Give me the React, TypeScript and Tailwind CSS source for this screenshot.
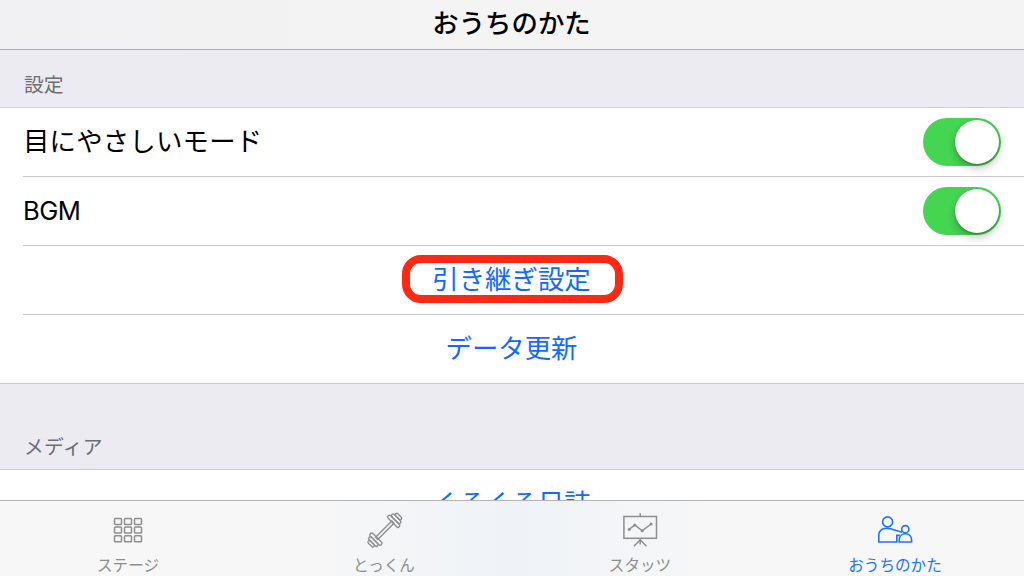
import { useState } from 'react'
import type { ReactNode } from 'react'
import clsx from 'clsx'

const GridIcon = () => (
  <svg width="40" height="40" viewBox="0 0 40 40" fill="none" stroke="currentColor" strokeWidth="1.5">
    {[8.4, 17.1, 25.8].map((y) =>
      [6.5, 16.5, 26.5].map((x) => <rect key={`${x}-${y}`} x={x} y={y} width="7" height="6" rx="0.8" />)
    )}
  </svg>
)

const BarbellIcon = () => (
  <svg width="40" height="40" viewBox="0 0 40 40" fill="none" stroke="currentColor" strokeWidth="1.4">
    <g transform="translate(20.8 20.2) rotate(-45)">
      <rect x="-11.5" y="-1.5" width="23" height="3" />
      <rect x="10.8" y="-7.8" width="3.6" height="15.6" rx="1.8" />
      <rect x="14.4" y="-6" width="3.4" height="12" rx="1.7" />
      <rect x="17.8" y="-3.9" width="3" height="7.8" rx="1.5" />
      <rect x="-14.4" y="-7.8" width="3.6" height="15.6" rx="1.8" />
      <rect x="-17.8" y="-6" width="3.4" height="12" rx="1.7" />
      <rect x="-20.8" y="-3.9" width="3" height="7.8" rx="1.5" />
    </g>
  </svg>
)

const BoardIcon = () => (
  <svg width="40" height="40" viewBox="0 0 40 40" fill="none" stroke="currentColor" strokeWidth="1.5">
    <rect x="3.9" y="6.5" width="32.6" height="21.8" />
    <path d="M20.2 3.2v3.3M20.2 28.2v6.3M20.2 29.7l-6.3 6.6M20.2 29.7l6.3 6.6" />
    <path d="M9.2 19.4l5.6-4.4 7.4 5.8 8.9-6.8" />
    <g fill="currentColor" stroke="none">
      <circle cx="9.2" cy="19.4" r="1.5" />
      <circle cx="14.8" cy="15" r="1.5" />
      <circle cx="22.2" cy="20.8" r="1.5" />
      <circle cx="31.1" cy="14" r="1.5" />
    </g>
  </svg>
)

const FamilyIcon = () => (
  <svg width="40" height="40" viewBox="0 0 40 40" fill="none" stroke="currentColor" strokeWidth="1.6">
    <circle cx="12.6" cy="11.9" r="5" />
    <path d="M27 22.2L15.5 18.8C9 17.2 3.8 19.6 3.8 25.4v6.6h18v-6.6h3" />
    <circle cx="30.3" cy="19.2" r="3.6" />
    <path d="M24.2 32v-2c0-8.4 12.4-8.4 12.4 0v2z" />
  </svg>
)

const SectionHeader = ({ title, className }: { title: string; className: string }) => (
  <div className={clsx('flex items-end border-b border-[#cbcbd0] bg-[#ebebf1] pl-6 text-[19.8px] text-[#6d6d72]', className)}>
    {title}
  </div>
)

const ToggleRow = ({ label, className }: { label: string; className?: string }) => {
  const [on, setOn] = useState(true)

  return (
    <div className="ml-[23px] flex h-[69px] items-center justify-between border-b border-[#cbcbce] pr-[23px]">
      <span className={clsx('leading-none', className)}>{label}</span>
      <button
        role="switch"
        aria-checked={on}
        aria-label={label}
        onClick={() => setOn(!on)}
        className={clsx('flex h-12 w-[78px] items-center rounded-full px-0.5', on ? 'justify-end bg-[#44d651]' : 'bg-gray-200')}
      >
        <span className="size-11 rounded-full bg-white shadow-[0_4px_9px_rgba(0,0,0,0.25),0_1px_2px_rgba(0,0,0,0.25)]" />
      </button>
    </div>
  )
}

const tabs: { label: string; icon: ReactNode; active?: boolean }[] = [
  { label: 'ステージ', icon: <GridIcon /> },
  { label: 'とっくん', icon: <BarbellIcon /> },
  { label: 'スタッツ', icon: <BoardIcon /> },
  { label: 'おうちのかた', icon: <FamilyIcon />, active: true },
]

export default function App() {
  return (
    <div className="flex h-[576px] w-[1024px] flex-col overflow-hidden bg-white font-['Inter','Noto_Sans_CJK_JP',sans-serif] text-black">
      <header className="flex h-[50px] shrink-0 items-center justify-center border-b border-[#b0b0b3] bg-linear-to-r from-[#f1f1f3] via-[#f4f4f4] to-[#f4f4f4] pr-px pb-0.5">
        <h1 className="text-[26.4px] leading-none font-medium">おうちのかた</h1>
      </header>

      <main className="min-h-0 flex-1 overflow-hidden">
        <SectionHeader title="設定" className="h-[58px] pb-[6px]" />
        <ToggleRow label="目にやさしいモード" className="pb-0.5 text-[26.4px] tracking-[0.2px]" />
        <ToggleRow label="BGM" className="text-[25.6px] tracking-[-0.6px]" />
        <div className="ml-[23px] flex h-[69px] items-center justify-center border-b border-[#cbcbce] pr-[23px] pb-0.5">
          {/* Highlighted action */}
          <button className="flex h-12 w-[221px] items-center justify-center rounded-[19px] border-8 border-[#ff2813] pr-px text-[26.4px] leading-none whitespace-nowrap text-[#0f6bff]">
            引き継ぎ設定
          </button>
        </div>
        <button className="flex h-[69px] w-full items-center justify-center border-b border-[#cbcbd0] pr-px pb-0.5 text-[26.4px] leading-none text-[#0f6bff]">
          データ更新
        </button>
        <SectionHeader title="メディア" className="h-[86px] pb-[6px] tracking-[0.3px]" />
        <button className="flex h-[69px] w-full items-center justify-center pb-0.5 text-[26.4px] leading-none text-[#0f6bff]">
          くるくる日誌
        </button>
      </main>

      <nav className="grid h-[76px] shrink-0 grid-cols-4 border-t border-[#b5b5b7] bg-linear-to-r from-[#f7f7f7] from-30% via-[#eff3f7] via-50% to-[#f7f7f7] to-70%">
        {tabs.map((tab) => (
          <button
            key={tab.label}
            className={clsx('flex flex-col items-center pt-[9px]', tab.active ? 'pr-0.5 text-[#1b74ff]' : 'text-[#8e8e8e]')}
          >
            {tab.icon}
            <span className="mt-2 text-[15.6px] leading-none">{tab.label}</span>
          </button>
        ))}
      </nav>
    </div>
  )
}
